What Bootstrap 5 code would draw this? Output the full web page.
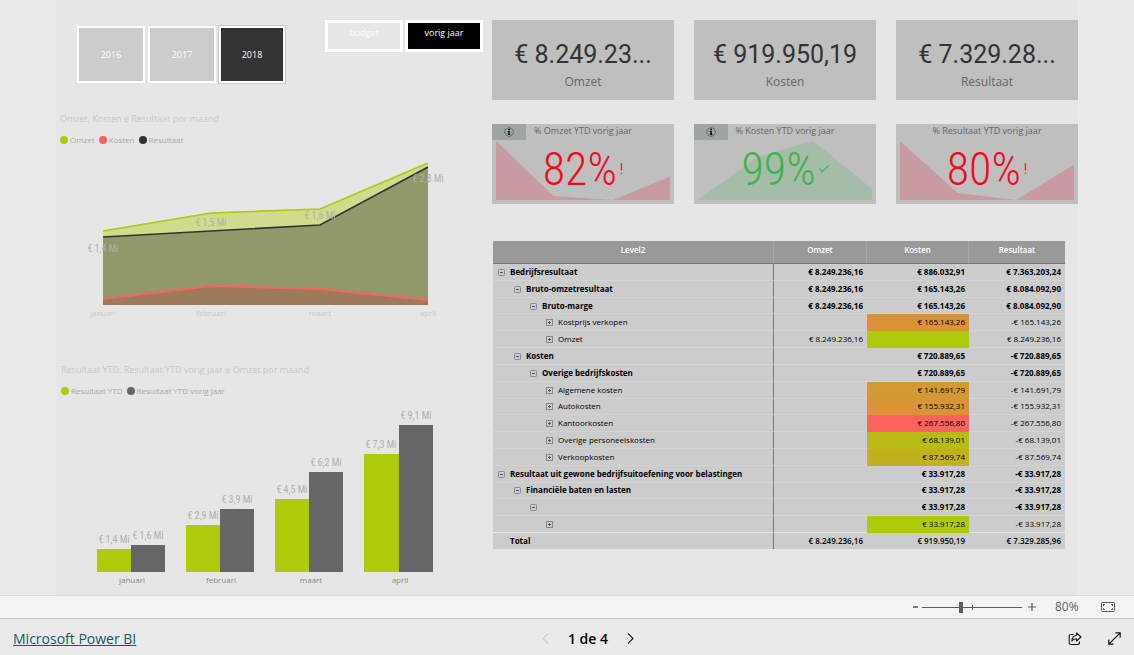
<!DOCTYPE html>
<html lang="nl">
<head>
<meta charset="utf-8">
<meta name="viewport" content="width=device-width, initial-scale=1">
<title>Resultaat dashboard</title>
<link href="https://cdn.jsdelivr.net/npm/bootstrap@5.3.0/dist/css/bootstrap.min.css" rel="stylesheet">
<style>
body{font-family:"Open Sans","Noto Sans",sans-serif;background:#eaeaea;font-size:9px;line-height:12px;color:#000}
.report{margin:0 56px;background:#e6e6e6;padding-top:20px}
.report-grid{display:grid;grid-template-columns:436fr 586fr}
button{font-family:inherit}
.slicers{padding:0 9px 0 21px}
.years{gap:3px;padding-top:6px}
.year-btn{width:68px;height:57px;border:2px solid #fff;background:#ccc;color:#fff;font-size:9px;padding:0}
.year-btn.active{width:66px;background:#333;outline:1px solid #ccc}
.toggles{gap:2px}
.toggle-btn{width:78px;height:32px;border:3px solid #fff;background:#e6e6e6;color:#fff;font-size:9px;line-height:12px;padding:0 0 6px}
.toggle-btn.active{background:#000}
.chart-title{font-size:9px;line-height:12px;color:#c6c6c6;font-weight:400;margin:0;padding-left:4px}
.legend-row{padding:9px 0 0 4px;gap:4px;color:#a8a8a8;font-size:8px}
.legend-row span{display:flex;align-items:center;gap:2px}
.dot{width:8px;height:8px;border-radius:50%}
.first-chart{margin-top:30px}
.second-chart{margin-top:44px;padding-left:1px}
.plot{display:block;width:100%;height:auto}
.plot text{text-anchor:middle;font-size:8px}
.plot .val{fill:#b0b0b0;font-family:"Roboto Condensed",Roboto,sans-serif;font-size:10px}
.plot .axis-light{fill:#c8c8c8}
.plot .axis-dark{fill:#888}
.tiles{display:grid;grid-template-columns:repeat(3,1fr);gap:24px 20px}
.tile{background:#bfbfbf;height:80px}
.tile-value{font:400 25px/30px Roboto,sans-serif;color:#333;padding-top:20px}
.tile-label{font-size:12px;line-height:16px;color:#666;padding-top:4px}
.kpi-title{font-size:9px;line-height:14px;color:#666;font-weight:400;margin:0}
.kpi-info{top:0;left:0;width:34px;height:16px;background:#9ea5a4}
.trend{left:4px;right:4px;top:17px;bottom:4px}
.trend svg{display:block;width:100%;height:100%}
.kpi-value{position:relative;font:300 46px/62px "Roboto Condensed",Roboto,sans-serif;gap:3px}
.kpi-value small{font:400 14px/16px "Roboto Condensed",Roboto,sans-serif}
.bad{color:#f00a1e}.good{color:#3cb44b}
.matrix{margin:37px 13px 0 1px;height:308px;table-layout:fixed;width:calc(100% - 14px);border-collapse:separate;border-spacing:0;font-size:8px;line-height:10px;background:#ccc}
.matrix th,.matrix td{padding:0 4px;border-bottom:1px solid #d3d3d3;white-space:nowrap;vertical-align:middle}
.matrix thead th{height:23px;background:#999;color:#fff;font-weight:600;text-align:center;vertical-align:top;padding-top:4px;border-bottom:1px solid #777;border-right:1px solid #a8a8a8}
.matrix thead th:last-child{border-right:0}
.matrix tbody th,.matrix tfoot th{border-right:1px solid #777;padding-left:5px;font-weight:700}
.matrix td{text-align:right}
.matrix .grp td{font-weight:700}
.matrix .leaf th{font-weight:400}
.matrix tbody tr:last-child>*{border-bottom-color:#e6e6e6}
.matrix tfoot td{font-weight:600}
.matrix tfoot th{padding-left:17px}
.matrix tfoot th,.matrix tfoot td{border-bottom:0;height:16px}
.matrix .lv1 th{padding-left:21px}.matrix .lv2 th{padding-left:37px}.matrix .lv3 th{padding-left:53px}
.exp{border:0;background:none;padding:0;width:7px;height:7px;display:inline-block;margin-right:5px;vertical-align:-1px;line-height:0}
.exp svg{display:block}
.zoombar{background:#f4f4f4;border-top:1px solid #dcdcdc;border-bottom:1px solid #c6c6c6;height:24px;padding-right:19px;color:#605e5c}
.icon-btn{border:0;background:none;padding:0;line-height:0;color:inherit}
.zoom-slider{-webkit-appearance:none;appearance:none;width:100px;height:11px;margin:0 6px 0 4px;background:linear-gradient(#605e5c,#605e5c) 50px 50%/1px 5px no-repeat,linear-gradient(#605e5c,#605e5c) 0 50%/100% 1px no-repeat}
.zoom-slider::-webkit-slider-thumb{-webkit-appearance:none;width:4px;height:11px;background:#605e5c;border:0}
.zoom-text{font-size:12px;width:23px;margin:0 23px 0 19px}
.footer-bar{display:grid;grid-template-columns:1fr auto 1fr;align-items:center;height:36px;padding:3px 13px 0;color:#000}
.footer-bar a{font-size:14px;line-height:20px;color:#0f5c63}
.pager{gap:19px;padding-left:42px;font-size:14px;font-weight:600;line-height:20px}
</style>
</head>
<body class="d-flex flex-column min-vh-100">
<main class="report flex-grow-1">
<div class="report-grid">
<section>
  <div class="slicers d-flex justify-content-between align-items-start">
    <div class="years d-flex">
      <button class="year-btn" type="button">2016</button>
      <button class="year-btn" type="button">2017</button>
      <button class="year-btn active" type="button" aria-pressed="true">2018</button>
    </div>
    <div class="toggles d-flex">
      <button class="toggle-btn" type="button">budget</button>
      <button class="toggle-btn active" type="button" aria-pressed="true">vorig jaar</button>
    </div>
  </div>

  <div class="first-chart">
    <h2 class="chart-title">Omzet, Kosten e Resultaat por maand</h2>
    <div class="legend-row d-flex">
      <span><i class="dot" style="background:#aeca0b"></i>Omzet</span>
      <span><i class="dot" style="background:#fd625e"></i>Kosten</span>
      <span><i class="dot" style="background:#333"></i>Resultaat</span>
    </div>
    <svg class="plot" viewBox="0 0 436 174" role="img" aria-label="Omzet, Kosten e Resultaat por maand">
      <path fill="#d0db8d" d="M47 85 155 67 264 63 372 17V159H47z"/>
      <path fill="#91996b" d="M47 91 155 85 264 79 372 21V159H47z"/>
      <path fill="#9c7b5b" d="M47 153 155 140 264 143 372 154V159H47z"/>
      <g fill="none" stroke-width="1.6">
        <path stroke="#aeca0b" d="M47 85 155 67 264 63 372 17"/>
        <path stroke="#333" d="M47 91 155 85 264 79 372 21"/>
        <path stroke="#fd625e" stroke-width="2" d="M47 153 155 140 264 143 372 154"/>
      </g>
      <g><text class="val" x="47" y="106">€ 1,4 Mi</text><text class="val" x="155" y="80">€ 1,5 Mi</text><text class="val" x="264" y="73">€ 1,6 Mi</text><text class="val" x="372" y="36">€ 2,8 Mi</text></g>
      <g class="axis-light"><text x="47" y="170">januari</text><text x="155" y="170">februari</text><text x="264" y="170">maart</text><text x="372" y="170">april</text></g>
    </svg>
  </div>

  <div class="second-chart">
    <h2 class="chart-title">Resultaat YTD, Resultaat YTD vorig jaar e Omzet por maand</h2>
    <div class="legend-row d-flex">
      <span><i class="dot" style="background:#aeca0b"></i>Resultaat YTD</span>
      <span><i class="dot" style="background:#666"></i>Resultaat YTD vorig jaar</span>
    </div>
    <svg class="plot" viewBox="1 0 435 192" role="img" aria-label="Resultaat YTD">
      <g fill="#aeca0b"><path d="M41 152h34v23H41zM130 128h34v47h-34zM219 102h34v73h-34zM308 57h35v118h-35z"/></g>
      <g fill="#666"><path d="M75 148h34v27H75zM164 112h34v63h-34zM253 75h34v100h-34zM343 28h34v147h-34z"/></g>
      <g><text class="val" x="58" y="146">€ 1,4 Mi</text><text class="val" x="92" y="142">€ 1,6 Mi</text><text class="val" x="147" y="122">€ 2,9 Mi</text><text class="val" x="181" y="106">€ 3,9 Mi</text><text class="val" x="236" y="96">€ 4,5 Mi</text><text class="val" x="270" y="69">€ 6,2 Mi</text><text class="val" x="325" y="51">€ 7,3 Mi</text><text class="val" x="360" y="22">€ 9,1 Mi</text></g>
      <g class="axis-dark"><text x="76" y="186">januari</text><text x="165" y="186">februari</text><text x="255" y="186">maart</text><text x="344" y="186">april</text></g>
    </svg>
  </div>
</section>

<section>
  <div class="tiles text-center">
    <div class="tile"><div class="tile-value">€ 8.249.23...</div><div class="tile-label">Omzet</div></div>
    <div class="tile"><div class="tile-value">€ 919.950,19</div><div class="tile-label">Kosten</div></div>
    <div class="tile"><div class="tile-value">€ 7.329.28...</div><div class="tile-label">Resultaat</div></div>

    <div class="tile position-relative">
      <div class="trend position-absolute"><svg viewBox="0 0 175 58" preserveAspectRatio="none"><path fill="#c99ba0" d="M0 0 58 54 118 58 175 35V58H0z"/></svg></div>
      <div class="kpi-info position-absolute d-flex align-items-center justify-content-center"><svg width="10" height="10" viewBox="0 0 10 10"><circle cx="5" cy="5" r="4.3" fill="none" stroke="#555" stroke-width=".7"/><path d="M4.2 1.8h1.7v1.4H4.2zM3.6 4h2.2v3.2h.7V8H3.6v-.8h.7V4.8h-.7z"/></svg></div>
      <h3 class="kpi-title position-relative">% Omzet YTD vorig jaar</h3>
      <div class="kpi-value bad d-flex justify-content-center align-items-center">82%<small>!</small></div>
    </div>
    <div class="tile position-relative">
      <div class="trend position-absolute"><svg viewBox="0 0 175 58" preserveAspectRatio="none"><path fill="#a4bca8" d="M0 58 59 16 116 0 175 47V58z"/></svg></div>
      <div class="kpi-info position-absolute d-flex align-items-center justify-content-center"><svg width="10" height="10" viewBox="0 0 10 10"><circle cx="5" cy="5" r="4.3" fill="none" stroke="#555" stroke-width=".7"/><path d="M4.2 1.8h1.7v1.4H4.2zM3.6 4h2.2v3.2h.7V8H3.6v-.8h.7V4.8h-.7z"/></svg></div>
      <h3 class="kpi-title position-relative">% Kosten YTD vorig jaar</h3>
      <div class="kpi-value good d-flex justify-content-center align-items-center">99%<svg width="10" height="8" viewBox="0 0 10 8" fill="none" stroke="currentColor" stroke-width="1.2"><path d="M.4 3.6 3.4 6.7 9.6.5"/></svg></div>
    </div>
    <div class="tile position-relative">
      <div class="trend position-absolute"><svg viewBox="0 0 175 58" preserveAspectRatio="none"><path fill="#c99ba0" d="M0 0 58 51 117 58 175 23V58H0z"/></svg></div>
      <h3 class="kpi-title position-relative">% Resultaat YTD vorig jaar</h3>
      <div class="kpi-value bad d-flex justify-content-center align-items-center">80%<small>!</small></div>
    </div>
  </div>

  <table class="matrix">
    <colgroup><col><col style="width:93px"><col style="width:102px"><col style="width:96px"></colgroup>
    <thead><tr><th scope="col">Level2</th><th scope="col">Omzet</th><th scope="col">Kosten</th><th scope="col">Resultaat</th></tr></thead>
    <tbody id="rows"></tbody>
    <tfoot><tr><th scope="row">Total</th><td>€ 8.249.236,16</td><td>€ 919.950,19</td><td>€ 7.329.285,96</td></tr></tfoot>
  </table>
</section>
</div>
</main>

<div class="zoombar d-flex align-items-center justify-content-end">
  <button class="icon-btn" type="button" aria-label="Uitzoomen"><svg width="5" height="10"><path d="M0 5h5" stroke="currentColor" stroke-width="1.6"/></svg></button>
  <input class="zoom-slider" type="range" min="0" max="100" value="39" aria-label="Zoom">
  <button class="icon-btn" type="button" aria-label="Inzoomen"><svg width="8" height="8"><path d="M0 4h8M4 0v8" stroke="currentColor" stroke-width="1.2"/></svg></button>
  <span class="zoom-text">80%</span>
  <button class="icon-btn" type="button" aria-label="Aan pagina aanpassen"><svg width="14" height="10" viewBox="0 0 14 10" fill="none" stroke="currentColor"><rect x=".5" y=".5" width="13" height="9" rx="1"/><path d="M2.5 4V2.5H4M10 2.5h1.5V4M2.5 6v1.5H4M10 7.500h1.5V6"/></svg></button>
</div>

<footer class="footer-bar">
  <div><a href="#">Microsoft Power BI</a></div>
  <nav class="pager d-flex align-items-center" aria-label="Pagina's">
    <button class="icon-btn" type="button" aria-label="Vorige" disabled><svg width="7" height="11" viewBox="0 0 7 11" fill="none" stroke="#b5b5b5"><path d="M6 .5 1 5.5 6 10.5"/></svg></button>
    <span>1 de 4</span>
    <button class="icon-btn" type="button" aria-label="Volgende"><svg width="7" height="11" viewBox="0 0 7 11" fill="none" stroke="#222" stroke-width="1.2"><path d="M1 .5 6 5.5 1 10.5"/></svg></button>
  </nav>
  <div class="d-flex justify-content-end align-items-center" style="gap:26px">
    <button class="icon-btn" type="button" aria-label="Delen"><svg width="14" height="14" viewBox="0 0 14 14" fill="none" stroke="#111" stroke-width="1.1" stroke-linejoin="round"><path d="M5.500 2.500H3A1.800 1.800 0 0 0 1.200 4.300v6.400A1.800 1.800 0 0 0 3 12.500h6.700a1.800 1.800 0 0 0 1.800-1.800V9.500M8.500 1l4.500 4-4.500 4V6.800C6.300 6.800 4.900 7.400 3.800 9c.2-3 1.700-5.300 4.700-5.700z"/></svg></button>
    <button class="icon-btn" type="button" aria-label="Volledig scherm"><svg width="13" height="13" viewBox="0 0 13 13" fill="none" stroke="#111" stroke-width="1.2"><path d="M.8 12.200 12.200.8M7.500.8h4.700v4.700M.8 7.500v4.700h4.700"/></svg></button>
  </div>
</footer>

<script>
// [level, label, omzet, kosten, resultaat, cell colour]
const data = [
  [0,"Bedrijfsresultaat","€ 8.249.236,16","€ 886.032,91","€ 7.363.203,24"],
  [1,"Bruto-omzetresultaat","€ 8.249.236,16","€ 165.143,26","€ 8.084.092,90"],
  [2,"Bruto-marge","€ 8.249.236,16","€ 165.143,26","€ 8.084.092,90"],
  [3,"Kostprijs verkopen","","€ 165.143,26","-€ 165.143,26","#dc9139"],
  [3,"Omzet","€ 8.249.236,16","","€ 8.249.236,16","#aeca0b"],
  [1,"Kosten","","€ 720.889,65","-€ 720.889,65"],
  [2,"Overige bedrijfskosten","","€ 720.889,65","-€ 720.889,65"],
  [3,"Algemene kosten","","€ 141.691,79","-€ 141.691,79","#d29a30"],
  [3,"Autokosten","","€ 155.932,31","-€ 155.932,31","#d89435"],
  [3,"Kantoorkosten","","€ 267.556,80","-€ 267.556,80","#fd625e"],
  [3,"Overige personeelskosten","","€ 68.139,01","-€ 68.139,01","#b9bc16"],
  [3,"Verkoopkosten","","€ 87.569,74","-€ 87.569,74","#c0b11d"],
  [0,"Resultaat uit gewone bedrijfsuitoefening voor belastingen","","€ 33.917,28","-€ 33.917,28"],
  [1,"Financiële baten en lasten","","€ 33.917,28","-€ 33.917,28"],
  [2,"","","€ 33.917,28","-€ 33.917,28"],
  [3,"","","€ 33.917,28","-€ 33.917,28","#aeca0b"]
];
document.getElementById("rows").innerHTML = data.map(([lv,name,a,b,c,col]) => {
  const leaf = lv === 3;
  const icon = `<svg width="7" height="7" viewBox="0 0 7 7" fill="none" stroke="#888"><rect x=".5" y=".5" width="6" height="6" rx="${leaf?0:1}"/><path stroke="#555" d="M2 3.5h3${leaf?"M3.5 2v3":""}"/></svg>`;
  return `<tr class="lv${lv} ${leaf?"leaf":"grp"}"><th scope="row"><button class="exp" type="button" aria-label="${leaf?"Uitvouwen":"Samenvouwen"}">${icon}</button>${name}</th><td>${a}</td><td${col?` style="background:${col};border-color:${col}"`:""}>${b}</td><td>${c}</td></tr>`;
}).join("");
</script>
<script src="https://cdn.jsdelivr.net/npm/bootstrap@5.3.0/dist/js/bootstrap.bundle.min.js"></script>
</body>
</html>
